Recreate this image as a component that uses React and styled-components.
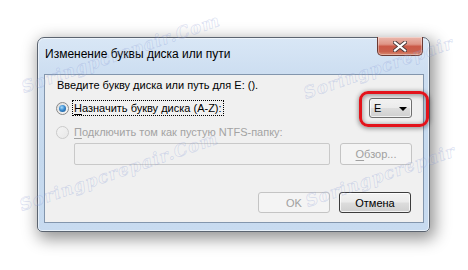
import React from "react";
import styled, { createGlobalStyle } from "styled-components";

const Global = createGlobalStyle`
  html, body { margin: 0; padding: 0; background: #ffffff; }
  body { font-family: "Liberation Sans", Arial, sans-serif; font-size: 11px; color: #000; }
  * { box-sizing: border-box; }
`;

const Page = styled.div`
  position: relative;
  width: 468px;
  height: 270px;
  overflow: hidden;
  padding: 37px 0 0 37px;
`;

const Window = styled.div`
  position: relative;
  width: 393px;
  height: 195px;
  display: flex;
  flex-direction: column;
  border: 1px solid #5b6470;
  border-radius: 7px 7px 5px 5px;
  background: linear-gradient(180deg, #d9e7f6 0%, #cddef1 18%, #c5d9ee 60%, #c8dbf0 100%);
  box-shadow: inset 0 0 0 1px rgba(255, 255, 255, 0.55), 3px 5px 16px 2px rgba(0, 0, 0, 0.42);
  padding: 0 5px 8px 6px;
`;

const TitleBar = styled.div`
  height: 36px;
  display: flex;
  align-items: flex-start;
  justify-content: space-between;
`;

const Title = styled.div`
  margin-top: 8px;
  margin-left: 1px;
  font-size: 12px;
  line-height: 16px;
  color: #000;
`;

const CloseButton = styled.div`
  margin-top: -1px;
  margin-right: 1px;
  width: 46px;
  height: 19px;
  border: 1px solid #6a3a33;
  border-top: none;
  border-radius: 0 0 5px 5px;
  background: linear-gradient(180deg, #ebb9ae 0%, #df9586 40%, #cb5a48 52%, #c9604c 80%, #d98c72 100%);
  box-shadow: inset 0 0 0 1px rgba(255, 255, 255, 0.35);
  display: flex;
  align-items: center;
  justify-content: center;
`;

const Client = styled.div`
  flex: 1;
  border: 1px solid #8396ad;
  background: #f0f0f0;
  display: flex;
  flex-direction: column;
  padding: 3px 11px 0 12px;
`;

const Prompt = styled.div`
  line-height: 14px;
  height: 14px;
`;

const OptionRow = styled.div`
  display: flex;
  align-items: center;
  height: ${(p) => p.$h}px;
  margin-top: ${(p) => p.$mt}px;
`;

const Radio = styled.span`
  flex: none;
  width: 13px;
  height: 13px;
  margin-left: -1px;
  border-radius: 50%;
  border: 1px solid ${(p) => (p.$disabled ? "#cbcbcb" : "#8a8a8a")};
  background: ${(p) =>
    p.$disabled
      ? "linear-gradient(135deg, #f4f4f4, #e8e8e8)"
      : "linear-gradient(135deg, #dcdcdc, #f8f8f8)"};
  display: flex;
  align-items: center;
  justify-content: center;
  &::after {
    content: "";
    display: ${(p) => (p.$checked ? "block" : "none")};
    width: 7px;
    height: 7px;
    border-radius: 50%;
    background: radial-gradient(circle at 40% 35%, #a8dcfb 0%, #3a8bd0 45%, #124c86 100%);
  }
`;

const Label = styled.span`
  margin-left: 3px;
  padding: 0 1px;
  line-height: 14px;
  border: 1px ${(p) => (p.$focus ? "dotted #000" : "solid transparent")};
  color: ${(p) => (p.$disabled ? "#a3a3a3" : "#000")};
  white-space: nowrap;
`;

const Key = styled.span`
  text-decoration: underline;
  text-underline-offset: 2px;
`;

const Spacer = styled.div`
  flex: 1;
`;

const Combo = styled.div`
  width: 43px;
  height: 20px;
  border: 1px solid #707070;
  border-radius: 3px;
  background: linear-gradient(180deg, #f2f2f2 0%, #ebebeb 48%, #dddddd 52%, #cfcfcf 100%);
  box-shadow: inset 0 0 0 1px rgba(255, 255, 255, 0.7);
  display: flex;
  align-items: center;
  justify-content: space-between;
  padding: 0 4px 0 4px;
  line-height: 16px;
`;

const Arrow = styled.span`
  width: 0;
  height: 0;
  border-left: 4px solid transparent;
  border-right: 4px solid transparent;
  border-top: 4px solid #000;
  margin-top: 1px;
`;

const PathRow = styled.div`
  display: flex;
  align-items: center;
  gap: 10px;
  margin-top: 3px;
  padding-left: 17px;
  height: 22px;
`;

const TextBox = styled.div`
  width: 256px;
  height: 22px;
  border: 1px solid #c9c9c9;
  border-radius: 2px;
  background: #f0f0f0;
`;

const Button = styled.div`
  width: ${(p) => p.$w}px;
  height: ${(p) => p.$hgt}px;
  border-radius: 3px;
  border: 1px solid ${(p) => (p.$disabled ? "#c4c4c4" : "#3c3c3c")};
  background: ${(p) =>
    p.$disabled
      ? "#f4f4f4"
      : "linear-gradient(180deg, #f2f2f2 0%, #ebebeb 48%, #dddddd 52%, #cfcfcf 100%)"};
  box-shadow: ${(p) => (p.$disabled ? "none" : "inset 0 0 0 1px rgba(255,255,255,0.75)")};
  color: ${(p) => (p.$disabled ? "#a0a0a0" : "#000")};
  display: flex;
  align-items: center;
  justify-content: center;
  line-height: 14px;
`;

const ButtonRow = styled.div`
  display: flex;
  justify-content: flex-end;
  gap: 9px;
  margin-top: 27px;
  padding-right: 1px;
`;

const Highlight = styled.div`
  position: absolute;
  left: 321px;
  top: 53px;
  width: 70px;
  height: 36px;
  border: 3px solid #e3131b;
  border-radius: 9px;
  box-shadow: 0 1px 4px 1px rgba(0, 0, 0, 0.35), inset 0 1px 4px 1px rgba(0, 0, 0, 0.35);
  pointer-events: none;
`;

const WatermarkLayer = styled.svg`
  position: absolute;
  left: 0;
  top: 0;
  width: 468px;
  height: 270px;
  pointer-events: none;
  font-family: "DejaVu Serif", "Liberation Serif", serif;
  font-style: italic;
  font-weight: bold;
  font-size: 17px;
  letter-spacing: 1px;
`;

const marks = [
  { x: 24, y: 93, t: "Soringpcrepair.Com" },
  { x: 306, y: 99, t: "Soringpcrepair" },
  { x: 22, y: 211, t: "Soringpcrepair.Com" },
  { x: 308, y: 207, t: "Soringpcrepair" },
];

export default function App() {
  return (
    <>
      <Global />
      <Page>
        <Window>
          <TitleBar>
            <Title>Изменение буквы диска или пути</Title>
            <CloseButton>
              <svg width="14" height="11" viewBox="0 0 14 11">
                <path
                  d="M2 1.5 L12 9.5 M12 1.5 L2 9.5"
                  stroke="#4a3a3a"
                  strokeWidth="4"
                  strokeLinecap="square"
                  fill="none"
                />
                <path
                  d="M2 1.5 L12 9.5 M12 1.5 L2 9.5"
                  stroke="#ffffff"
                  strokeWidth="2.2"
                  strokeLinecap="square"
                  fill="none"
                />
              </svg>
            </CloseButton>
          </TitleBar>
          <Client>
            <Prompt>Введите букву диска или путь для E: ().</Prompt>
            <OptionRow $h={20} $mt={6}>
              <Radio $checked />
              <Label $focus>
                <Key>Н</Key>азначить букву диска (A-Z):
              </Label>
              <Spacer />
              <Combo>
                <span>E</span>
                <Arrow />
              </Combo>
            </OptionRow>
            <OptionRow $h={16} $mt={6}>
              <Radio $disabled />
              <Label $disabled>
                <Key>П</Key>одключить том как пустую NTFS-папку:
              </Label>
            </OptionRow>
            <PathRow>
              <TextBox />
              <Button $disabled $w={72} $hgt={22}>
                <span>
                  <Key>О</Key>бзор...
                </span>
              </Button>
            </PathRow>
            <ButtonRow>
              <Button $disabled $w={72} $hgt={21}>
                OK
              </Button>
              <Button $w={72} $hgt={21}>
                Отмена
              </Button>
            </ButtonRow>
          </Client>
          <Highlight />
        </Window>
        <WatermarkLayer viewBox="0 0 468 270">
          {marks.map((m, i) => (
            <text
              key={i}
              x={m.x}
              y={m.y}
              transform={`rotate(-19 ${m.x} ${m.y})`}
              fill="rgba(255,255,255,0.1)"
              stroke="rgba(125,145,210,0.28)"
              strokeWidth="0.7"
            >
              {m.t}
            </text>
          ))}
        </WatermarkLayer>
      </Page>
    </>
  );
}
